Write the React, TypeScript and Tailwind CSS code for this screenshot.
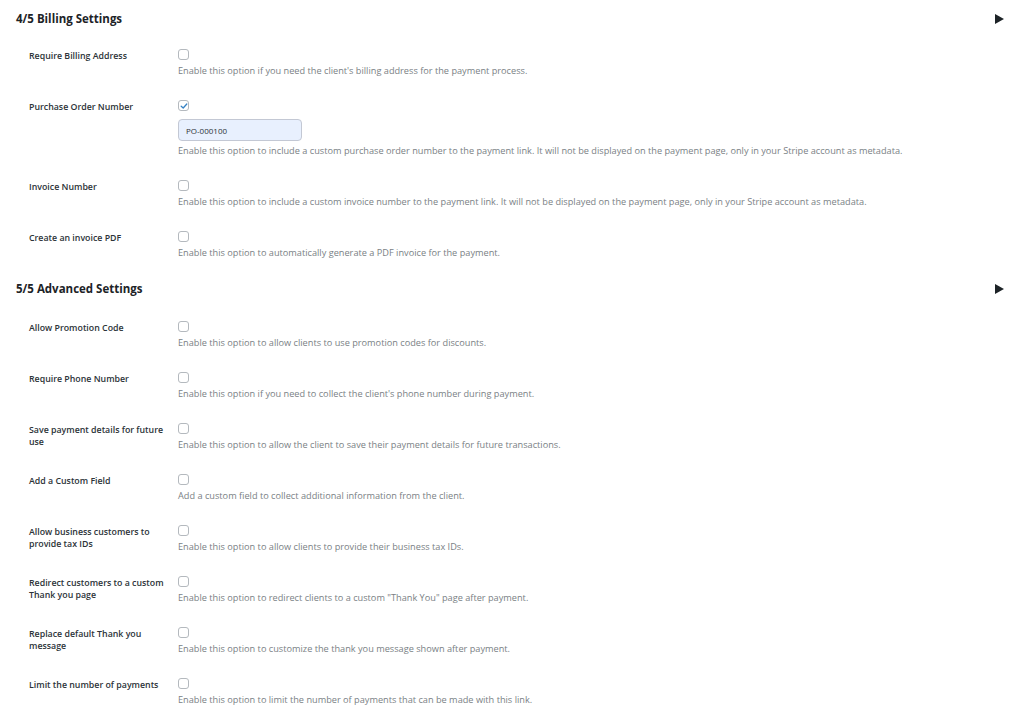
import { useState } from 'react';

type Option = {
  label: string;
  help: string;
  checked?: boolean;
  input?: string;
};

const billing: Option[] = [
  { label: 'Require Billing Address', help: "Enable this option if you need the client's billing address for the payment process." },
  {
    label: 'Purchase Order Number',
    help: 'Enable this option to include a custom purchase order number to the payment link. It will not be displayed on the payment page, only in your Stripe account as metadata.',
    checked: true,
    input: 'PO-000100',
  },
  { label: 'Invoice Number', help: 'Enable this option to include a custom invoice number to the payment link. It will not be displayed on the payment page, only in your Stripe account as metadata.' },
  { label: 'Create an invoice PDF', help: 'Enable this option to automatically generate a PDF invoice for the payment.' },
];

const advanced: Option[] = [
  { label: 'Allow Promotion Code', help: 'Enable this option to allow clients to use promotion codes for discounts.' },
  { label: 'Require Phone Number', help: "Enable this option if you need to collect the client's phone number during payment." },
  { label: 'Save payment details for future use', help: 'Enable this option to allow the client to save their payment details for future transactions.' },
  { label: 'Add a Custom Field', help: 'Add a custom field to collect additional information from the client.' },
  { label: 'Allow business customers to provide tax IDs', help: 'Enable this option to allow clients to provide their business tax IDs.' },
  { label: 'Redirect customers to a custom Thank you page', help: 'Enable this option to redirect clients to a custom "Thank You" page after payment.' },
  { label: 'Replace default Thank you message', help: 'Enable this option to customize the thank you message shown after payment.' },
  { label: 'Limit the number of payments', help: 'Enable this option to limit the number of payments that can be made with this link.' },
];

function Checkbox({ checked, onChange }: { checked: boolean; onChange: () => void }) {
  return (
    <button
      type="button"
      onClick={onChange}
      className="w-[11px] h-[11px] rounded-[3px] border border-[#b4b9be] bg-white flex items-center justify-center"
    >
      {checked && (
        <svg viewBox="0 0 10 10" className="w-[8px] h-[8px]">
          <path d="M1.5 5.2 L4 7.5 L8.5 2.5" fill="none" stroke="#3582c4" strokeWidth={1.6} strokeLinecap="round" strokeLinejoin="round" />
        </svg>
      )}
    </button>
  );
}

function Row({ option }: { option: Option }) {
  const [checked, setChecked] = useState(!!option.checked);
  const [value, setValue] = useState(option.input ?? '');

  return (
    <div className="grid grid-cols-[162px_1fr] pt-[12px] pb-[11px]">
      <div className="pl-[13px] pr-[6px] pt-[1px] text-[8.8px] leading-[12px] font-semibold text-[#2c3338]">
        {option.label}
      </div>
      <div>
        <Checkbox checked={checked} onChange={() => setChecked(!checked)} />
        {option.input !== undefined && (
          <input
            value={value}
            onChange={e => setValue(e.target.value)}
            className="mt-[8px] mb-[-1px] block w-[124px] h-[22px] rounded-[4px] border border-[#c3c8d4] bg-[#e8f0fe] px-[7px] text-[8px] text-[#2c3338] outline-none"
          />
        )}
        <p className="mt-[5px] text-[9.2px] leading-[12px] text-[#7a7f85]">{option.help}</p>
      </div>
    </div>
  );
}

function Section({ title, options, className, bodyClass }: { title: string; options: Option[]; className?: string; bodyClass: string }) {
  return (
    <section className={className}>
      <div className="flex items-center justify-between h-[16px] pr-[20px]">
        <h2 className="text-[11.5px] font-bold text-[#1d2327]">{title}</h2>
        <svg viewBox="0 0 9 10" className="w-[9px] h-[10px]">
          <polygon points="0,0 9,5 0,10" fill="#1d2327" />
        </svg>
      </div>
      <div className={bodyClass}>
        {options.map(o => (
          <Row key={o.label} option={o} />
        ))}
      </div>
    </section>
  );
}

export default function App() {
  return (
    <div className="min-h-screen bg-white pl-[16px] pt-[11px]" style={{ fontFamily: '"Open Sans", "Noto Sans", sans-serif' }}>
      <Section title="4/5 Billing Settings" options={billing} bodyClass="mt-[10px]" />
      <Section title="5/5 Advanced Settings" options={advanced} className="mt-[11px]" bodyClass="mt-[12px]" />
    </div>
  );
}
